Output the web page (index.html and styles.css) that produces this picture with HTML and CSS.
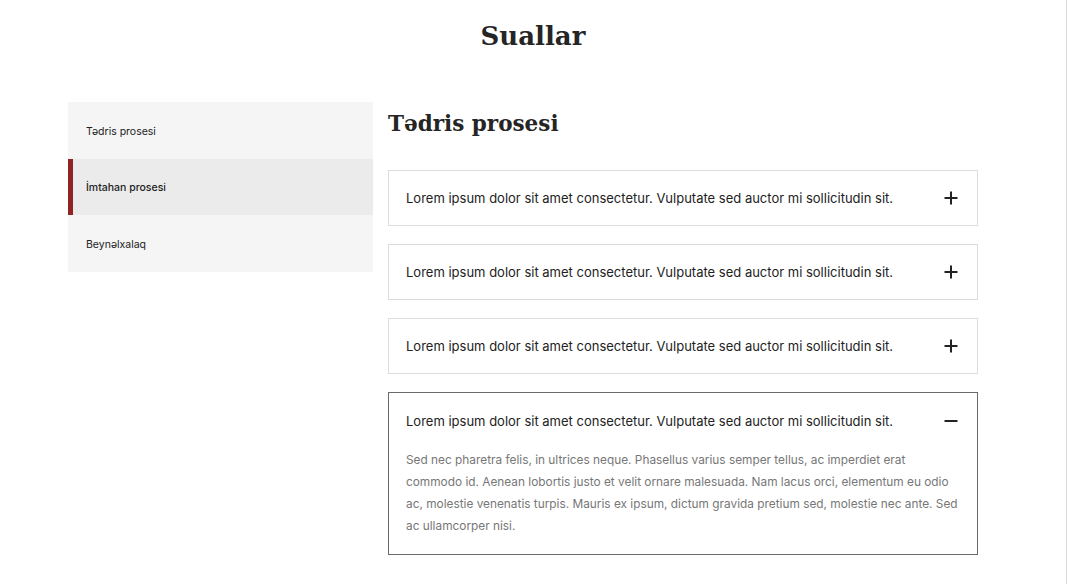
FILE: index.html
```html
<!DOCTYPE html>
<html lang="az">
<head>
<meta charset="utf-8">
<title>Suallar</title>
<link rel="stylesheet" href="styles.css">
</head>
<body>
<div class="page">
  <h1 class="page-title">Suallar</h1>
  <div class="layout">
    <nav class="side">
      <a class="side-item">Tədris prosesi</a>
      <a class="side-item active">İmtahan prosesi</a>
      <a class="side-item">Beynəlxalaq</a>
    </nav>
    <section class="content">
      <h2 class="section-title">Tədris prosesi</h2>
      <div class="faq">
        <div class="faq-item">
          <div class="faq-q"><span>Lorem ipsum dolor sit amet consectetur. Vulputate sed auctor mi sollicitudin sit.</span>
            <svg class="icon" viewBox="0 0 16 16"><path d="M8 1.5v13M1.5 8h13"/></svg></div>
        </div>
        <div class="faq-item">
          <div class="faq-q"><span>Lorem ipsum dolor sit amet consectetur. Vulputate sed auctor mi sollicitudin sit.</span>
            <svg class="icon" viewBox="0 0 16 16"><path d="M8 1.5v13M1.5 8h13"/></svg></div>
        </div>
        <div class="faq-item">
          <div class="faq-q"><span>Lorem ipsum dolor sit amet consectetur. Vulputate sed auctor mi sollicitudin sit.</span>
            <svg class="icon" viewBox="0 0 16 16"><path d="M8 1.5v13M1.5 8h13"/></svg></div>
        </div>
        <div class="faq-item open">
          <div class="faq-q"><span>Lorem ipsum dolor sit amet consectetur. Vulputate sed auctor mi sollicitudin sit.</span>
            <svg class="icon" viewBox="0 0 16 16"><path d="M1.5 8h13"/></svg></div>
          <p class="faq-a">Sed nec pharetra felis, in ultrices neque. Phasellus varius semper tellus, ac imperdiet erat commodo id. Aenean lobortis justo et velit ornare malesuada. Nam lacus orci, elementum eu odio ac, molestie venenatis turpis. Mauris ex ipsum, dictum gravida pretium sed, molestie nec ante. Sed ac ullamcorper nisi.</p>
        </div>
      </div>
    </section>
  </div>
</div>
</body>
</html>
```
FILE: styles.css
```css
* { box-sizing: border-box; }
html, body { margin: 0; padding: 0; background: #fff; }
body { font-family: Inter, "Liberation Sans", sans-serif; color: #222; }
.page {
  width: 1067px;
  min-height: 584px;
  border-right: 1px solid #d9d9d9;
}
.page-title {
  margin: 0;
  padding-top: 14px;
  height: 102px;
  text-align: center;
  font-family: "DejaVu Serif", "Liberation Serif", serif;
  font-weight: 700;
  font-size: 26px;
  line-height: 44px;
  color: #252525;
}
.layout {
  display: grid;
  grid-template-columns: 305px 590px;
  column-gap: 15px;
  padding-left: 68px;
}
.side {
  display: flex;
  flex-direction: column;
  background: #f5f5f5;
  align-self: start;
}
.side-item {
  display: flex;
  align-items: center;
  height: 56.5px;
  padding-top: 2px;
  padding-left: 13px;
  font-size: 10.5px;
  color: #222;
  border-left: 5px solid transparent;
}
.side-item.active {
  background: #ebebeb;
  border-left-color: #8e2424;
  font-weight: 500;
}
.section-title {
  margin: 0;
  height: 68px;
  padding-top: 2px;
  font-family: "DejaVu Serif", "Liberation Serif", serif;
  font-weight: 700;
  font-size: 21.5px;
  line-height: 40px;
  color: #252525;
}
.faq {
  display: flex;
  flex-direction: column;
  gap: 18px;
}
.faq-item {
  border: 1px solid #dcdcdc;
}
.faq-item.open { border-color: #6a6a6a; }
.faq-q {
  display: flex;
  align-items: center;
  justify-content: space-between;
  height: 54px;
  padding: 0 18px 0 17px;
  font-size: 13px;
  color: #222;
}
.open .faq-q { padding-top: 1px; }
.icon {
  width: 16px;
  height: 16px;
  fill: none;
  stroke: #222;
  stroke-width: 2;
}
.faq-a {
  margin: 0;
  padding: 2px 14px 17px 17px;
  font-size: 11.85px;
  line-height: 22px;
  color: #777;
}
```
